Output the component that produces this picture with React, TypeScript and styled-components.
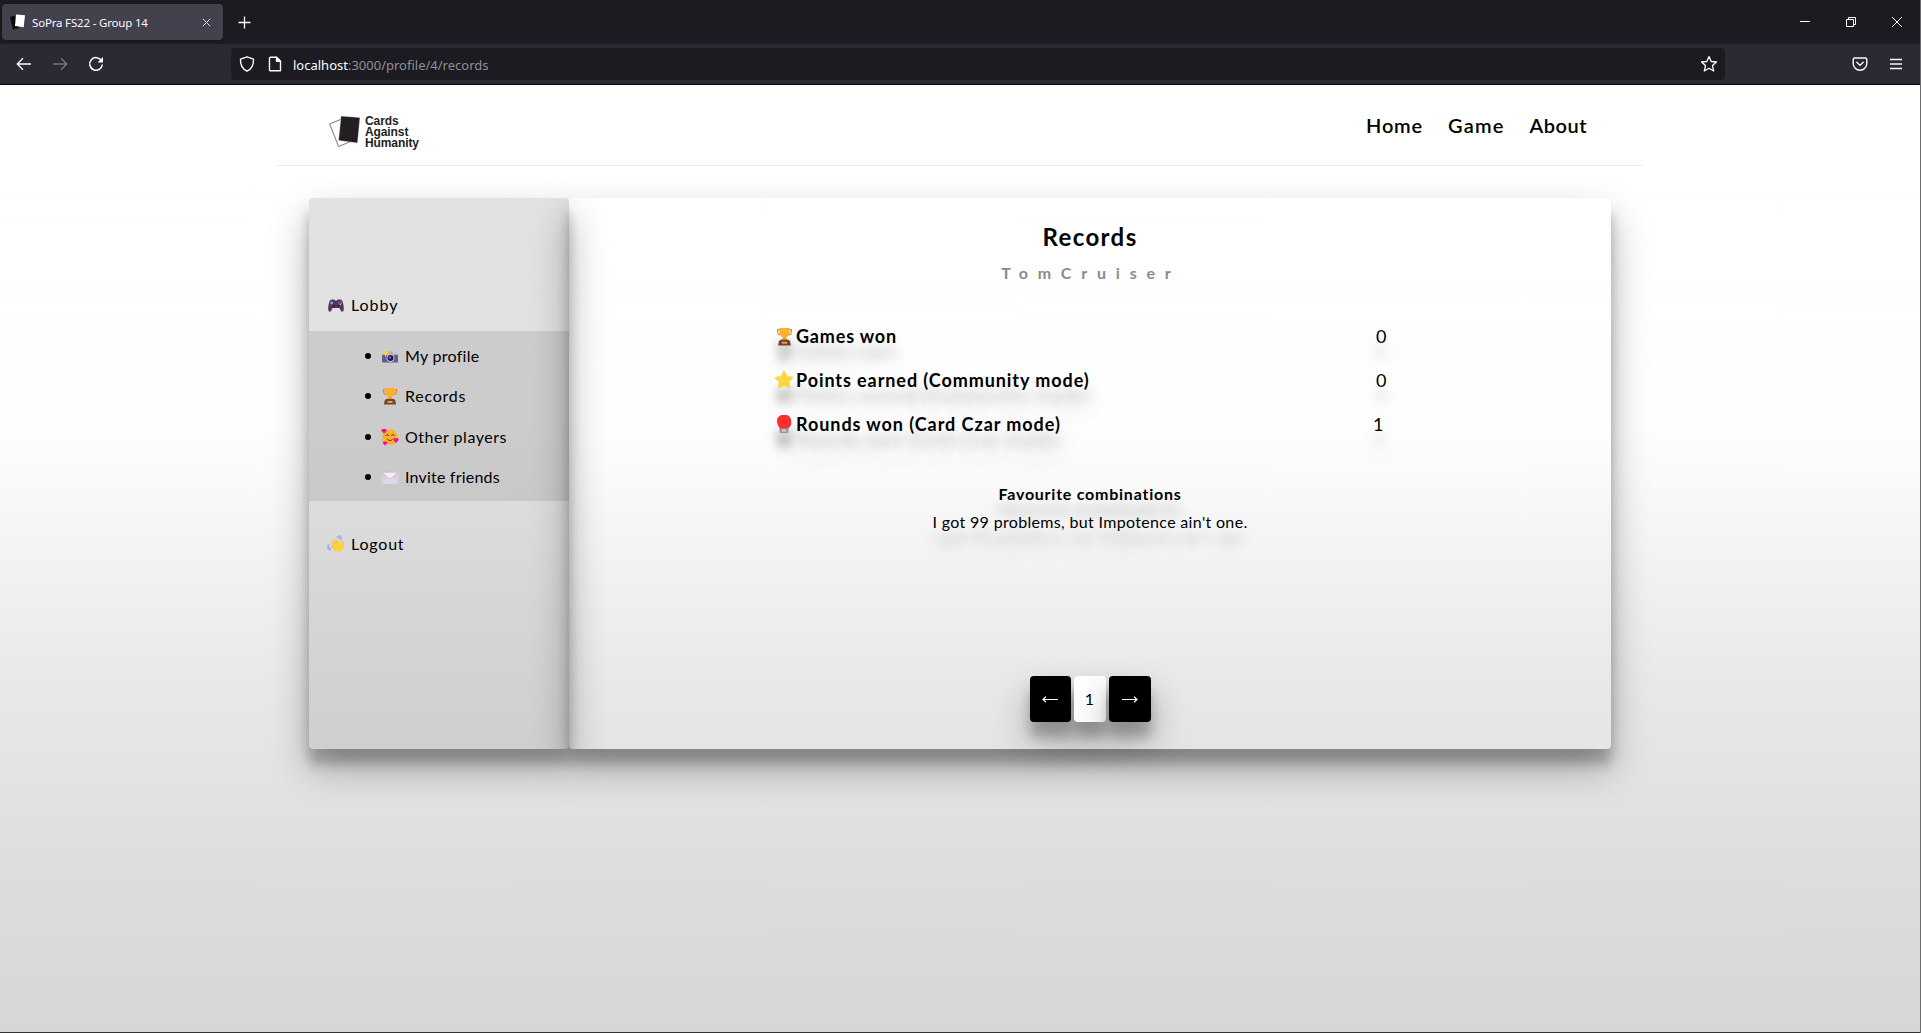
import React from "react";
import styled, { createGlobalStyle, css } from "styled-components";

const sans = '"Lato", "Liberation Sans", sans-serif';
const chrome = '"Noto Sans", "Open Sans", sans-serif';
const lift = "0 19px 38px rgba(0,0,0,.3), 0 15px 12px rgba(0,0,0,.22)";

const GlobalStyle = createGlobalStyle`
  * { box-sizing: border-box; }
  html, body { margin: 0; padding: 0; background: #fff; overflow: hidden; }
  ul { list-style: none; margin: 0; padding: 0; }
  svg { display: block; flex: none; }
`;

const Window = styled.div`
  width: 1921px; height: 1033px; display: flex; flex-direction: column; overflow: hidden;
  border-right: 1px solid #6d6d70; font-family: ${sans}; color: #000;
`;
const TabStrip = styled.div`
  height: 44px; flex: none; background: #1c1b22; display: flex; align-items: center; padding: 0 18px 0 2px;
`;
const Tab = styled.div`
  width: 221px; height: 36px; border-radius: 4px; background: #42414d; color: #fbfbfe;
  display: flex; align-items: center; padding: 0 12px 0 8px; gap: 6px;
  box-shadow: 0 0 3px rgba(0,0,0,.4); font: 400 11.5px/36px ${chrome};
`;
const TabTitle = styled.span`flex: 1; letter-spacing: -0.18px; white-space: nowrap; padding-top: 1px;`;
const Plus = styled.div`margin-left: 15px; flex: 1;`;
const WindowButtons = styled.div`display: flex; gap: 36px; align-items: center;`;
const Toolbar = styled.div`
  height: 41px; flex: none; background: #2b2a33; border-bottom: 1px solid #0c0c0d;
  display: flex; align-items: center; padding: 0 17px 0 16px;
`;
const NavButtons = styled.div`display: flex; gap: 20px; width: 215px;`;
const AddressBar = styled.div`
  width: 1494px; height: 32px; border-radius: 4px; background: #1c1b22; display: flex; align-items: center;
  padding: 0 7px 0 8px; gap: 12px;
`;
const Url = styled.span`
  flex: 1; margin-left: -2px; padding-top: 1px; font: 400 13px/32px ${chrome}; color: #8f8f94;
  b { font-weight: 400; color: #fbfbfe; }
`;
const ToolIcons = styled.div`display: flex; gap: 21px; margin-left: auto; align-items: center;`;

const Page = styled.div`
  flex: 1; border-bottom: 1px solid #333;
  background: linear-gradient(#fff 0, #fefefe 340px, #f8f8f8 415px, #f0f0f0 505px, #e8e8e8 605px, #e4e4e4 675px, #dddddd 790px, #d6d6d6 948px);
  display: flex; flex-direction: column; align-items: center;
`;
const Header = styled.header`
  width: 1366px; height: 81px; border-bottom: 1px solid #ececec; display: flex; justify-content: space-between;
  padding: 0 56px 0 52px; flex: none;
`;
const Brand = styled.div`display: flex; gap: 6px; padding-top: 30px;`;
const BrandName = styled.div`
  font: 700 12px/11px "Liberation Sans", Arial, sans-serif; letter-spacing: -0.1px; color: #231f20;
  display: flex; flex-direction: column; padding-top: 1px; margin-left: -1px;
`;
const Nav = styled.nav`display: flex; gap: 25px; padding-top: 27px;`;

const Panel = styled.main`display: flex; width: 1302px; height: 551px; margin-top: 32px;`;
const Sidebar = styled.aside`
  width: 260px; border-radius: 4px; background: linear-gradient(rgba(0,0,0,.114) 50%, rgba(0,0,0,.093)); box-shadow: ${lift};
  padding-top: 97px;
`;
const Content = styled.section`
  width: 1042px; border-radius: 4px; box-shadow: ${lift}; padding-top: 24px;
  display: flex; flex-direction: column; align-items: center;
`;

const Text = styled.span<{ $size: number; $line: number; $weight?: number; $spacing?: number; $shadow?: boolean }>`
  font-size: ${(p) => p.$size}px; line-height: ${(p) => p.$line}px; font-weight: ${(p) => p.$weight ?? 400};
  letter-spacing: ${(p) => p.$spacing ?? 0}px; white-space: nowrap;
  ${(p) => p.$shadow && css`text-shadow: ${lift};`}
`;
const MenuRow = styled.div`height: 20px; display: flex; align-items: center; gap: 6px; padding-left: 18px;`;
const SubMenu = styled.ul`
  && { margin: 16px 0 33px; padding: 15px 0 14px 56px; }
  background: rgba(0,0,0,.092); height: 170px; display: flex; flex-direction: column; justify-content: space-between;
`;
const SubItem = styled.li`
  height: 20px; display: flex; align-items: center; gap: 6px;
  &::before { content: ""; width: 6px; height: 6px; border-radius: 3px; background: #000; margin-right: 4px; }
`;
const UserName = styled.div`color: #8b8b8b; margin-top: 11px; height: 20px; padding-left: 2px;`;
const Stats = styled.div`display: flex; flex-direction: column; gap: 20px; width: 632px; margin: 41px 0 44px;`;
const StatRow = styled.div`display: grid; grid-template-columns: 20px 1fr 31px; gap: 0 2px; height: 24px; align-items: center;`;
const StatValue = styled(Text)<{ $narrow: boolean }>`margin-left: ${(p) => (p.$narrow ? -2 : 1)}px;`;
const ShadowIcon = styled.div`filter: drop-shadow(0 15px 6px rgba(0,0,0,.3)); display: flex; justify-content: center;`;
const Pager = styled.div`display: flex; gap: 3px; margin-top: 140px;`;
const PageButton = styled.button<{ $width: number; $dark?: boolean }>`
  width: ${(p) => p.$width}px; height: 46px; padding: 0; border: 0; border-radius: 4px; box-shadow: ${lift};
  display: flex; align-items: center; justify-content: center;
  background: ${(p) => (p.$dark ? "#000" : "#fff")}; color: ${(p) => (p.$dark ? "#fff" : "#000")};
  font: 400 16px/46px ${sans};
`;

const Gamepad = () => (
  <svg width="18" height="18" viewBox="0 0 18 18">
    <path d="M5 3.5h2.4l.6 1h2l.6-1H13c1.8 0 2.6 1.3 3.2 4.3.6 2.8.9 5.8.3 7-.6 1.2-2.200 1.200-2.900-.2L12.500 12h-7L4.400 14.600c-.7 1.400-2.300 1.400-2.900.2-.6-1.200-.3-4.200.3-7C2.400 4.800 3.200 3.500 5 3.500z" fill="#533566" />
    <circle cx="6.800" cy="10" r="1.600" fill="#3b2450" /><circle cx="11.200" cy="10" r="1.600" fill="#3b2450" />
    <circle cx="4.700" cy="7" r="1.400" fill="#8fa3e8" /><circle cx="13.300" cy="5.500" r=".8" fill="#f92f60" />
    <circle cx="12" cy="7" r=".8" fill="#3f8de8" /><circle cx="14.600" cy="7" r=".8" fill="#3cc06a" /><circle cx="13.300" cy="8.400" r=".8" fill="#f5b731" />
  </svg>
);
const Camera = () => (
  <svg width="18" height="18" viewBox="0 0 18 18">
    <path d="M6 4.500h5l1 2h5V9H1V6.500h4z" fill="#b4acbc" /><rect x="13" y="4.800" width="3" height="2" fill="#c8c2cf" />
    <rect x="1" y="8" width="16" height="7.500" rx="1" fill="#635994" />
    <circle cx="9.500" cy="11" r="4" fill="#cdc4d6" /><circle cx="9.500" cy="11" r="3" fill="#1c1c3a" /><circle cx="9" cy="10.500" r="1.200" fill="#5b78c8" />
    <path d="M4.500 2l1.200 2.800L8.500 6 5.700 7.200 4.500 10 3.300 7.200.5 6l2.800-1.200z" fill="#fcd53f" />
  </svg>
);
const Trophy = ({ size = 18 }: { size?: number }) => (
  <svg width={size} height={size} viewBox="0 0 18 18">
    <path d="M4 2.500H2.500v1.700c0 2 1.500 3.300 3.300 3.300M14 2.500h1.500v1.700c0 2-1.500 3.300-3.300 3.300" fill="none" stroke="#d9883a" strokeWidth="1.100" />
    <path d="M4 1h10v3.500c0 2.800-1.500 5-3.800 5.500v2.500H7.800V10C5.500 9.500 4 7.300 4 4.500z" fill="#ffb02e" />
    <path d="M7.800 9.800h2.400L12 12.500H6z" fill="#f39a20" />
    <path d="M5 12h8l1.200 1.500.9 4H2.900l.9-4z" fill="#6d4534" /><rect x="6.500" y="14" width="5" height="1.800" fill="#f3a82c" />
  </svg>
);
const Face = () => (
  <svg width="18" height="18" viewBox="0 0 18 18">
    <circle cx="9" cy="9.200" r="7.800" fill="#ffb02e" />
    <path d="M5 7.500c.6-1.300 2-1.300 2.700 0M10.500 7.500c.6-1.300 2-1.300 2.700 0M6.500 11.200c1 1.900 4 1.900 5 0" fill="none" stroke="#402a32" strokeWidth="1" strokeLinecap="round" />
    <path d="M3 5.500L.6 3C-.2 1.500 1.700-.3 3 1.200 4.300-.3 6.200 1.500 5.400 3zM15 15l-2.500-2.800c-.7-1.600 1.200-3 2.500-1.500 1.300-1.500 3.200-.1 2.500 1.500zM4 17.500l-2-2.200c-.6-1.300 1-2.500 2-1.300 1-1.200 2.600 0 2 1.300z" fill="#f70a8d" />
  </svg>
);
const Envelope = () => (
  <svg width="18" height="18" viewBox="0 0 18 18">
    <rect x=".5" y="4" width="17" height="12" rx="1" fill="#d8cfe0" /><path d="M1 15.500l6-6h4l6 6z" fill="#e1d8ec" />
    <path d="M.8 4.200h16.400L10 10.400c-.6.500-1.400.5-2 0z" fill="#f3eef8" stroke="#b4acbc" strokeWidth=".6" />
  </svg>
);
const Wave = () => (
  <svg width="18" height="18" viewBox="0 0 18 18">
    <path d="M10 1.800c2 .1 3.200 1.200 3.600 3M12 .6c1.500.4 2.300 1.200 2.700 2.600M1.200 9.500c-.2 2 .6 3.500 2.300 4.300M.6 12c.3 1.400 1 2.300 2.300 3" fill="none" stroke="#8fb0ee" strokeWidth="1.200" strokeLinecap="round" />
    <path d="M5.200 8.500l5 5M6.300 6.300l5 5M8.800 5l4 5M5 11.500l4 3.500M15.600 6.500v5.500" stroke="#ffc83d" strokeWidth="2.200" strokeLinecap="round" />
    <path d="M7.500 9l4.500-2.500 2.500 3 2-.5c.6 3 0 5-1.600 6.600-2.500 1.800-5 1.200-7-.4L6 12z" fill="#ffd03f" />
  </svg>
);
const Star = () => (
  <svg width="20" height="20" viewBox="0 0 20 20">
    <path d="M10 2l2.500 5 5.500.8-4 3.900.9 5.500-4.900-2.600-4.900 2.600.9-5.500-4-3.900 5.500-.8z" fill="#fcd53f" stroke="#fcd53f" strokeWidth="2" strokeLinejoin="round" />
  </svg>
);
const Glove = () => (
  <svg width="20" height="20" viewBox="0 0 20 20">
    <rect x="5.500" y="13.500" width="9" height="5.500" rx=".8" fill="#9b9b9b" /><rect x="8" y="15.500" width="4" height="2" fill="#d8d8d8" />
    <path d="M9 1h3c3 0 5 2.500 5 5.500 0 3.500-1 5-2.500 8H6C4 12 3 9.500 3 7c0-3.500 2.500-6 6-6z" fill="#f8312f" />
    <path d="M15.500 5c2 1.500 1.800 6-.5 8" fill="none" stroke="#d2203c" />
  </svg>
);
const ThinArrow = ({ right }: { right?: boolean }) => (
  <svg width="16" height="7" viewBox="0 0 16 7" fill="none" stroke="#fff" strokeWidth="1.200">
    {right ? <path d="M0 3.500h15M12 .8l3 2.700-3 2.700" /> : <path d="M16 3.500H1M4 .8L1 3.500l3 2.700" />}
  </svg>
);

const nav = [
  { label: "Home", spacing: 0.8 },
  { label: "Game", spacing: 1.2 },
  { label: "About", spacing: 0.5 },
];
const menu = [
  { icon: <Camera />, label: "My profile", spacing: 0.28 },
  { icon: <Trophy />, label: "Records", spacing: 0.75 },
  { icon: <Face />, label: "Other players", spacing: 0.52 },
  { icon: <Envelope />, label: "Invite friends", spacing: 0.2 },
];
const stats = [
  { icon: <Trophy size={19} />, label: "Games won", value: "0", spacing: 0.82 },
  { icon: <Star />, label: "Points earned (Community mode)", value: "0", spacing: 0.92 },
  { icon: <Glove />, label: "Rounds won (Card Czar mode)", value: "1", spacing: 0.94 },
];

export default function App() {
  return (
    <Window>
      <GlobalStyle />
      <TabStrip>
        <Tab>
          <svg width="16" height="16" viewBox="0 0 16 16"><path d="M0 3l5-1.500L9 14l-6 1.500z" fill="#0b0b0b" /><path d="M6 .5l9 .8-1.300 12L5 12z" fill="#fff" /></svg>
          <TabTitle>SoPra FS22 - Group 14</TabTitle>
          <svg width="9" height="9" viewBox="0 0 9 9"><path d="M.8.8l7.400 7.400M8.200.8L.8 8.200" stroke="#dcdce0" strokeWidth="1" /></svg>
        </Tab>
        <Plus><svg width="13" height="13" viewBox="0 0 13 13"><path d="M6.500.5v12M.5 6.500h12" stroke="#fbfbfe" strokeWidth="1.300" /></svg></Plus>
        <WindowButtons>
          <svg width="10" height="10"><path d="M0 4.500h10" stroke="#fff" /></svg>
          <svg width="10" height="10" fill="none" stroke="#fff"><path d="M.5 2.500h7v7h-7zM2.500 2.500v-2h7v7h-2" /></svg>
          <svg width="10" height="10"><path d="M0 0l10 10M10 0L0 10" stroke="#fff" /></svg>
        </WindowButtons>
      </TabStrip>
      <Toolbar>
        <NavButtons>
          <svg width="16" height="16" viewBox="0 0 16 16" fill="none" stroke="#fbfbfe" strokeWidth="1.300"><path d="M15 8H1.500M7 2.300L1.300 8 7 13.700" /></svg>
          <svg width="16" height="16" viewBox="0 0 16 16" fill="none" stroke="#77767e" strokeWidth="1.300"><path d="M1 8h13.500M9 2.300L14.700 8 9 13.700" /></svg>
          <svg width="16" height="16" viewBox="0 0 16 16" fill="none" stroke="#fbfbfe" strokeWidth="1.500"><path d="M13.500 4.800A6.300 6.300 0 1 0 14.300 8.500" /><path d="M15 1v5.500H9.500z" fill="#fbfbfe" stroke="none" /></svg>
        </NavButtons>
        <AddressBar>
          <svg width="16" height="16" viewBox="0 0 16 16" fill="none" stroke="#fbfbfe" strokeWidth="1.400" strokeLinejoin="round"><path d="M8 .8l6.500 2.400c.3 5.500-1.500 9.500-6.500 12-5-2.500-6.800-6.500-6.500-12z" /></svg>
          <svg width="16" height="16" viewBox="0 0 16 16" fill="none" stroke="#fbfbfe" strokeWidth="1.400" strokeLinejoin="round"><path d="M3.500 1.200h6l4 4v9.600h-10a1 1 0 0 1-1-1V2.200a1 1 0 0 1 1-1z" /><path d="M9.500 1.200v4h4z" fill="#fbfbfe" /></svg>
          <Url><b>localhost</b>:3000/profile/4/records</Url>
          <svg width="18" height="18" viewBox="0 0 18 18" fill="none" stroke="#fbfbfe" strokeWidth="1.300" strokeLinejoin="round"><path d="M9 1.500l2.200 5 5.300.5-4 3.600 1.200 5.400L9 13.200 4.300 16l1.200-5.400-4-3.600 5.300-.5z" /></svg>
        </AddressBar>
        <ToolIcons>
          <svg width="16" height="16" viewBox="0 0 16 16" fill="none" stroke="#fbfbfe" strokeWidth="1.400" strokeLinecap="round"><path d="M2.500 2h11a1.300 1.300 0 0 1 1.300 1.300V7.500a6.800 6.800 0 0 1-13.600 0V3.300A1.300 1.300 0 0 1 2.500 2z" /><path d="M4.800 6.300L8 9.400l3.200-3.100" /></svg>
          <svg width="14" height="14"><path d="M1 2.500h12M1 7h12M1 11.500h12" stroke="#fbfbfe" strokeWidth="1.300" /></svg>
        </ToolIcons>
      </Toolbar>
      <Page>
        <Header>
          <Brand>
            <svg width="31" height="34" viewBox="0 0 31 34"><path d="M.7 9L14 3.500l9 22.500L9.500 31.500z" fill="none" stroke="#555" strokeWidth=".8" /><path d="M12 1l19 1.500L28.500 28 9.500 25.500z" fill="#231f20" stroke="#fff" strokeWidth=".4" /></svg>
            <BrandName><span>Cards</span><span>Against</span><span>Humanity</span></BrandName>
          </Brand>
          <Nav>
            {nav.map((n) => <Text key={n.label} $size={20} $line={26} $weight={600} $spacing={n.spacing}>{n.label}</Text>)}
          </Nav>
        </Header>
        <Panel>
          <Sidebar>
            <MenuRow><Gamepad /><Text $size={16} $line={20} $spacing={0.95}>Lobby</Text></MenuRow>
            <SubMenu>
              {menu.map((m) => <SubItem key={m.label}>{m.icon}<Text $size={16} $line={20} $spacing={m.spacing}>{m.label}</Text></SubItem>)}
            </SubMenu>
            <MenuRow><Wave /><Text $size={16} $line={20} $spacing={0.8}>Logout</Text></MenuRow>
          </Sidebar>
          <Content>
            <Text $size={24} $line={30} $weight={700} $spacing={1.4}>Records</Text>
            <UserName><Text $size={16} $line={20} $weight={700} $spacing={9.8}>TomCruiser</Text></UserName>
            <Stats>
              {stats.map((s) => (
                <StatRow key={s.label}>
                  <ShadowIcon>{s.icon}</ShadowIcon>
                  <Text $size={18} $line={24} $weight={700} $spacing={s.spacing} $shadow>{s.label}</Text>
                  <StatValue $size={18} $line={24} $shadow $narrow={s.value === "1"}>{s.value}</StatValue>
                </StatRow>
              ))}
            </Stats>
            <Text $size={16} $line={28} $weight={700} $spacing={0.76} $shadow>Favourite combinations</Text>
            <Text $size={16} $line={28} $spacing={0.33} $shadow>I got 99 problems, but Impotence ain't one.</Text>
            <Pager>
              <PageButton $width={41} $dark aria-label="Previous"><ThinArrow /></PageButton>
              <PageButton $width={32}>1</PageButton>
              <PageButton $width={42} $dark aria-label="Next"><ThinArrow right /></PageButton>
            </Pager>
          </Content>
        </Panel>
      </Page>
    </Window>
  );
}
